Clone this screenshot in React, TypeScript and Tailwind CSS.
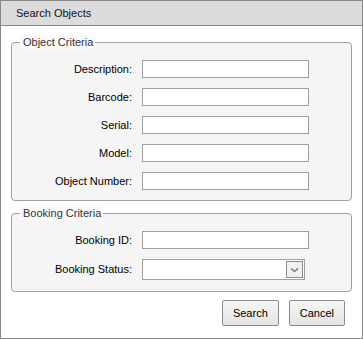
import React from 'react';

const objectFields = ['Description:', 'Barcode:', 'Serial:', 'Model:', 'Object Number:'];

function TextBox() {
  return <input type="text" className="h-[18px] w-[167px] border border-[#a0a0a0] bg-white outline-none" />;
}

function Btn({ label }: { label: string }) {
  return (
    <button className="h-[26px] px-[10px] border border-[#8c8c8c] rounded-[2px] bg-gradient-to-b from-[#f7f7f7] to-[#e3e3e3] text-[11px] text-black">
      {label}
    </button>
  );
}

export default function App() {
  return (
    <div className="w-[363px] h-[339px] border border-[#888] bg-white flex flex-col font-['Liberation_Sans',Arial,sans-serif] text-[11px] text-black">
      <div className="h-[25px] shrink-0 flex items-center pl-[15px] bg-[#dcdcdc] border-b border-[#888] text-[11px] text-[#111]">
        Search Objects
      </div>

      <fieldset className="mx-[10px] mt-[9px] border border-[#a0a0a0] rounded-[4px] bg-[#f5f5f5] pb-[10px]">
        <legend className="ml-[8px] pl-[3px] pr-[2px] bg-[#fafafa] text-[#333] leading-[14px]">Object Criteria</legend>
        <div className="grid grid-cols-[120px_167px] gap-x-[10px] gap-y-[10px] items-center pt-[11px]">
          {objectFields.map((f) => (
            <React.Fragment key={f}>
              <label className="text-right">{f}</label>
              <TextBox />
            </React.Fragment>
          ))}
        </div>
      </fieldset>

      <fieldset className="mx-[10px] mt-[5px] border border-[#a0a0a0] rounded-[4px] bg-[#f5f5f5] pb-[11px]">
        <legend className="ml-[8px] pl-[3px] pr-[2px] bg-[#fafafa] text-[#333] leading-[14px]">Booking Criteria</legend>
        <div className="grid grid-cols-[120px_167px] gap-x-[10px] gap-y-[10px] items-center pt-[11px]">
          <label className="text-right">Booking ID:</label>
          <TextBox />
          <label className="text-right">Booking Status:</label>
          <div className="h-[21px] w-[163px] border border-[#a0a0a0] bg-white flex items-center justify-end pr-[1px]">
            <div className="h-[17px] w-[17px] border border-[#8a8a8a] bg-[#f0f0f0] flex items-center justify-center">
              <svg width="9" height="6" viewBox="0 0 9 6">
                <path d="M1 1.5 L4.5 4.5 L8 1.5" fill="none" stroke="#666" strokeWidth="1.2" />
              </svg>
            </div>
          </div>
        </div>
      </fieldset>

      <div className="flex justify-end gap-[10px] pr-[17px] mt-[8px]">
        <Btn label="Search" />
        <Btn label="Cancel" />
      </div>
    </div>
  );
}
